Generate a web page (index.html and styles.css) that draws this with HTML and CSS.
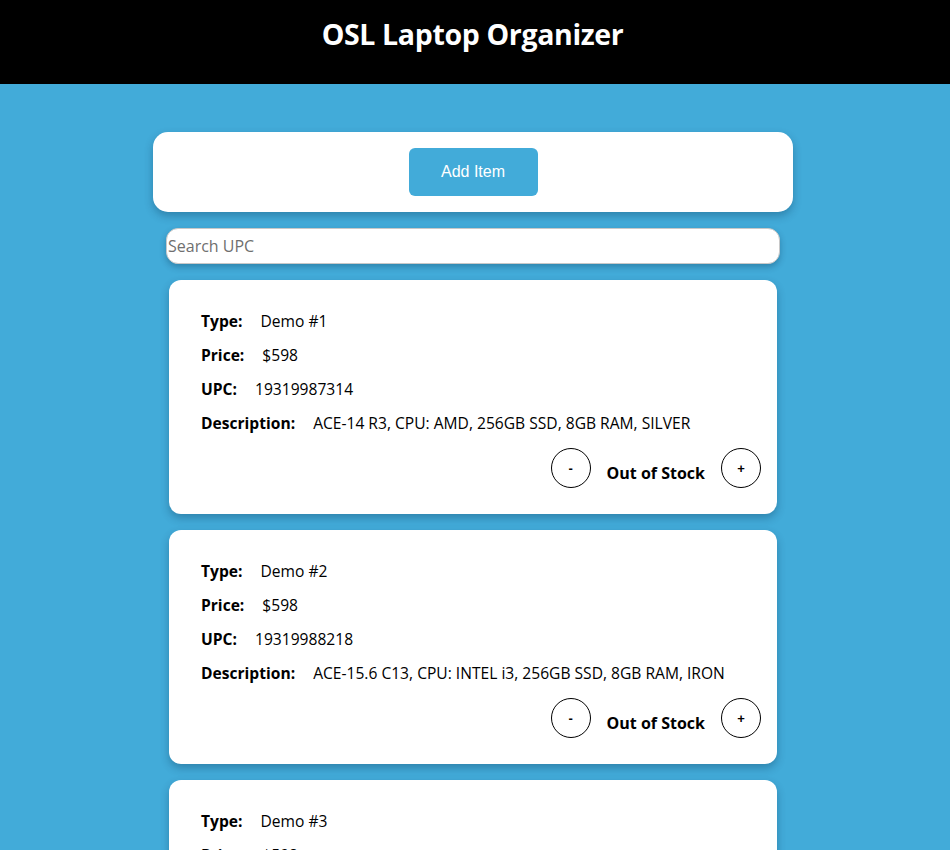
FILE: index.html
```html
<!DOCTYPE html>
<html lang="en">
<head>
<meta charset="utf-8">
<title>OSL Laptop Organizer</title>
<link rel="stylesheet" href="styles.css">
</head>
<body>
<header class="topbar">
  <h1 class="title">OSL Laptop Organizer</h1>
</header>
<main class="content">
  <section class="add-panel">
    <button class="add-btn" type="button">Add Item</button>
  </section>
  <input class="search" type="text" placeholder="Search UPC">
  <div class="list">
    <article class="card">
      <p class="row"><span class="label">Type:</span><span>Demo #1</span></p>
      <p class="row"><span class="label">Price:</span><span>$598</span></p>
      <p class="row"><span class="label">UPC:</span><span>19319987314</span></p>
      <p class="row"><span class="label">Description:</span><span>ACE-14 R3, CPU: AMD, 256GB SSD, 8GB RAM, SILVER</span></p>
      <div class="stock">
        <button class="circle" type="button">-</button>
        <span class="stock-text">Out of Stock</span>
        <button class="circle" type="button">+</button>
      </div>
    </article>
    <article class="card">
      <p class="row"><span class="label">Type:</span><span>Demo #2</span></p>
      <p class="row"><span class="label">Price:</span><span>$598</span></p>
      <p class="row"><span class="label">UPC:</span><span>19319988218</span></p>
      <p class="row"><span class="label">Description:</span><span>ACE-15.6 C13, CPU: INTEL i3, 256GB SSD, 8GB RAM, IRON</span></p>
      <div class="stock">
        <button class="circle" type="button">-</button>
        <span class="stock-text">Out of Stock</span>
        <button class="circle" type="button">+</button>
      </div>
    </article>
    <article class="card">
      <p class="row"><span class="label">Type:</span><span>Demo #3</span></p>
      <p class="row"><span class="label">Price:</span><span>$598</span></p>
      <p class="row"><span class="label">UPC:</span><span>19319988219</span></p>
      <p class="row"><span class="label">Description:</span><span>ACE-15.6 C13, CPU: INTEL i3, 256GB SSD, 8GB RAM, IRON</span></p>
      <div class="stock">
        <button class="circle" type="button">-</button>
        <span class="stock-text">Out of Stock</span>
        <button class="circle" type="button">+</button>
      </div>
    </article>
  </div>
</main>
</body>
</html>
```
FILE: styles.css
```css
* { box-sizing: border-box; }
html, body {
  margin: 0;
  padding: 0;
  background: #42abd9;
  font-family: "Open Sans", "Noto Sans", sans-serif;
  color: #000;
}
.topbar {
  background: #000;
  height: 84px;
  padding: 15px 5px 0 0;
}
.title {
  margin: 0;
  color: #fff;
  text-align: center;
  font-size: 28.5px;
  line-height: 38px;
  font-weight: 700;
  letter-spacing: -0.35px;
}
.content {
  width: 640px;
  margin: 48px 0 0 calc(50% - 322px);
  display: flex;
  flex-direction: column;
  align-items: center;
}
.add-panel {
  width: 640px;
  height: 80px;
  background: #fff;
  border-radius: 15px;
  box-shadow: 0 4px 8px rgba(0, 40, 70, 0.3);
  display: flex;
  justify-content: center;
  align-items: center;
}
.add-btn {
  width: 129px;
  height: 48px;
  border: none;
  border-radius: 6px;
  background: #42abd9;
  color: #fff;
  font-family: "Liberation Sans", Arial, sans-serif;
  font-size: 16px;
}
.search {
  margin-top: 16px;
  width: 614px;
  height: 36px;
  border: 1px solid #c8c8c8;
  border-radius: 12px;
  padding: 0 1px;
  font-family: "Open Sans", "Noto Sans", sans-serif;
  font-size: 16px;
  box-shadow: 0 3px 6px rgba(0, 40, 70, 0.3);
}
.search::placeholder { color: #6f6f6f; }
.list {
  margin-top: 16px;
  display: flex;
  flex-direction: column;
  gap: 16px;
}
.card {
  width: 608px;
  height: 234px;
  background: #fff;
  border-radius: 12px;
  box-shadow: 0 4px 8px rgba(0, 40, 70, 0.3);
  padding: 16px 16px 26px 32px;
}
.row {
  margin: 16px 0;
  font-size: 15.6px;
  line-height: 18px;
  display: flex;
  gap: 18px;
  white-space: nowrap;
}
.label { font-weight: 700; }
.stock {
  display: flex;
  justify-content: flex-end;
  align-items: center;
  gap: 16px;
  margin-top: 16px;
}
.circle {
  width: 40px;
  height: 40px;
  border-radius: 50%;
  border: 1px solid #000;
  background: #fff;
  color: #000;
  font-family: "Liberation Sans", Arial, sans-serif;
  font-size: 13px;
  font-weight: 700;
  padding: 0;
}
.stock-text {
  font-weight: 700;
  font-size: 16px;
  padding-top: 10px;
}
```
